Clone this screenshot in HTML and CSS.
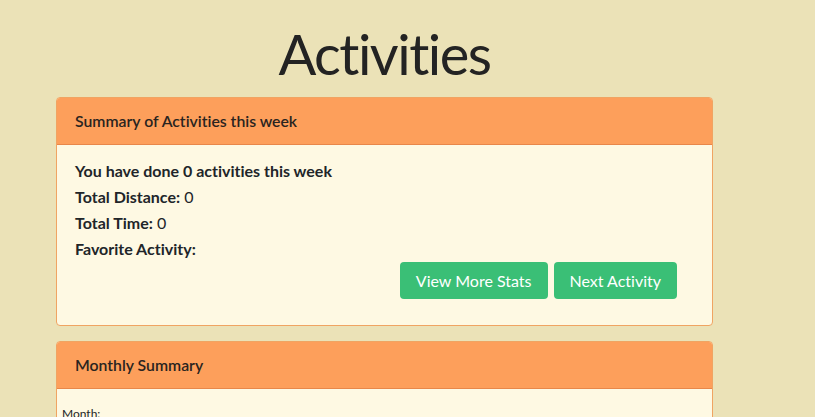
FILE: index.html
```html
<!DOCTYPE html>
<html>
<head>
<meta charset="utf-8">
<link rel="stylesheet" href="styles.css">
</head>
<body>
<div class="page">
  <h1 class="title">Activities</h1>
  <div class="card">
    <div class="card-header">Summary of Activities this week</div>
    <div class="card-body">
      <div class="line"><b>You have done 0 activities this week</b></div>
      <div class="line"><b>Total Distance:</b> 0</div>
      <div class="line"><b>Total Time:</b> 0</div>
      <div class="line"><b>Favorite Activity:</b></div>
      <div class="actions">
        <button class="btn">View More Stats</button>
        <button class="btn">Next Activity</button>
      </div>
    </div>
  </div>
  <div class="card">
    <div class="card-header">Monthly Summary</div>
    <div class="card-body small-body">
      <div class="month">Month:</div>
    </div>
  </div>
</div>
</body>
</html>
```
FILE: styles.css
```css
html, body {
  margin: 0;
  padding: 0;
  background: #ebe2b7;
  font-family: Lato, "Noto Sans", sans-serif;
  font-variant-ligatures: none;
  color: #212529;
  overflow: hidden;
}
.page {
  width: 657px;
  margin-left: 56px;
  padding-top: 18px;
}
.title {
  margin: 0 0 7px 0;
  text-align: center;
  font-size: 56px;
  font-weight: 400;
  line-height: 72px;
  letter-spacing: -1.5px;
  color: #232323;
}
.card {
  border: 1px solid #f0a462;
  border-radius: 4px;
  background: #fef9e3;
  margin-bottom: 15px;
  overflow: hidden;
}
.card-header {
  background: #fd9f5b;
  border-bottom: 1px solid #e8874a;
  padding: 0 18px;
  height: 46px;
  line-height: 46px;
  font-size: 15.8px;
  font-weight: 600;
  color: #2a2420;
}
.card-body {
  padding: 13px 18px 26px 18px;
  font-size: 16px;
  line-height: 26px;
}
.card-body b {
  font-weight: 700;
}
.actions {
  display: flex;
  justify-content: flex-end;
  gap: 6px;
  padding-right: 17px;
}
.btn {
  font-family: inherit;
  font-variant-ligatures: none;
  font-size: 16px;
  color: #fff;
  background: #3abf76;
  border: none;
  border-radius: 4px;
  height: 37px;
  padding: 0 16px;
}
.small-body {
  padding: 17px 5px 0 5px;
}
.month {
  font-size: 12px;
  line-height: 16px;
}
```
